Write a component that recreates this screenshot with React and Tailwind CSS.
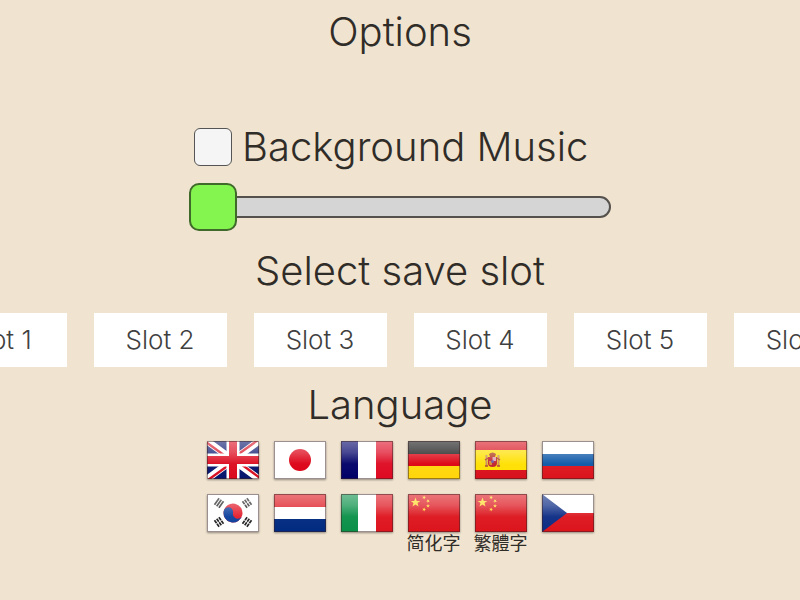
import { useState } from 'react';

const slots = [1, 2, 3, 4, 5, 6];

const star = 'M0 -5L1.3 -1.6L4.8 -1.5L2 0.6L3 4L0 2L-3 4L-2 0.6L-4.8 -1.5L-1.3 -1.6Z';

function HorizontalBands({ colors }) {
  return (
    <>
      <rect width="52" height="13" fill={colors[0]} />
      <rect y="13" width="52" height="12" fill={colors[1]} />
      <rect y="25" width="52" height="13" fill={colors[2]} />
    </>
  );
}

function VerticalBands({ colors }) {
  return (
    <>
      <rect width="17" height="38" fill={colors[0]} />
      <rect x="17" width="18" height="38" fill={colors[1]} />
      <rect x="35" width="17" height="38" fill={colors[2]} />
    </>
  );
}

function UnitedKingdom() {
  return (
    <>
      <rect width="52" height="38" fill="#06146c" />
      <path d="M0 0L52 38M52 0L0 38" stroke="#fff" strokeWidth="7" />
      <path d="M-1 1L25 20M53 37L27 18M51 -1L26 17M1 39L26 21" stroke="#d80f22" strokeWidth="2.4" />
      <path d="M26 0V38M0 19H52" stroke="#fff" strokeWidth="13" />
      <path d="M26 0V38M0 19H52" stroke="#dc0a1e" strokeWidth="8" />
    </>
  );
}

function Japan() {
  return (
    <>
      <rect width="52" height="38" fill="#fff" />
      <circle cx="26" cy="19" r="11" fill="#dc0014" />
    </>
  );
}

function Trigram({ x, y, angle, broken }) {
  return (
    <g transform={`translate(${x} ${y}) rotate(${angle})`} stroke="#222" strokeWidth="1.7">
      <path d="M-4 -2.7H4M-4 0H4M-4 2.7H4" />
      {broken && <path d="M0 -4.5V4.5" stroke="#fff" strokeWidth="0.8" />}
    </g>
  );
}

function SouthKorea() {
  return (
    <>
      <rect width="52" height="38" fill="#fff" />
      <g transform="rotate(12 26 19)">
        <circle cx="26" cy="19" r="9.5" fill="#e21d2c" />
        <path
          d="M16.5 19A4.75 4.75 0 0 1 26 19A4.75 4.75 0 0 0 35.5 19A9.5 9.5 0 0 1 16.5 19Z"
          fill="#0c3f9c"
        />
      </g>
      <Trigram x={12} y={9} angle={-55} />
      <Trigram x={40} y={9} angle={55} broken />
      <Trigram x={12} y={28} angle={55} broken />
      <Trigram x={40} y={28} angle={-55} broken />
    </>
  );
}

function China() {
  return (
    <>
      <rect width="52" height="38" fill="#dc141c" />
      <g fill="#ffda28">
        <path d={star} transform="translate(7.5 8.5)" />
        <path d={star} transform="translate(16 3.5) rotate(20) scale(0.4)" />
        <path d={star} transform="translate(20 7) rotate(40) scale(0.4)" />
        <path d={star} transform="translate(20 12) scale(0.4)" />
        <path d={star} transform="translate(16 15.5) rotate(20) scale(0.4)" />
      </g>
    </>
  );
}

function Spain() {
  return (
    <>
      <rect width="52" height="38" fill="#ffe000" />
      <rect width="52" height="9" fill="#d8101c" />
      <rect y="29" width="52" height="9" fill="#d8101c" />
      <path d="M11.5 14V25M23.5 14V25" stroke="#c9895a" strokeWidth="2" />
      <path d="M10 25H13M22 25H25M10 19L13 17M22 17L25 19" stroke="#b5432a" strokeWidth="1.5" />
      <path d="M14 13Q17.5 10 21 13L20 16H15Z" fill="#b03c1c" />
      <path d="M13 16H22V22Q22 26 17.5 26Q13 26 13 22Z" fill="#c0202c" />
      <path d="M17.5 16H21V20H17.5Z" fill="#dca4b0" />
      <path d="M14 20H17V24H14.5Z" fill="#d88b2c" />
      <circle cx="17.5" cy="20.5" r="1.5" fill="#6a55a5" />
    </>
  );
}

function Czechia() {
  return (
    <>
      <rect width="52" height="19" fill="#fff" />
      <rect y="19" width="52" height="19" fill="#dc141c" />
      <path d="M0 0L25 19L0 38Z" fill="#0c2c84" />
    </>
  );
}

const languages = [
  { id: 'en', name: 'English', art: <UnitedKingdom /> },
  { id: 'ja', name: 'Japanese', art: <Japan /> },
  { id: 'fr', name: 'French', art: <VerticalBands colors={['#000068', '#fff', '#de0a22']} /> },
  { id: 'de', name: 'German', art: <HorizontalBands colors={['#111', '#dc0010', '#ffd60a']} /> },
  { id: 'es', name: 'Spanish', art: <Spain /> },
  { id: 'ru', name: 'Russian', art: <HorizontalBands colors={['#fff', '#0a56a6', '#dc141c']} /> },
  { id: 'ko', name: 'Korean', art: <SouthKorea /> },
  { id: 'nl', name: 'Dutch', art: <HorizontalBands colors={['#dc141c', '#fff', '#002a80']} /> },
  { id: 'it', name: 'Italian', art: <VerticalBands colors={['#0a9048', '#fff', '#de141e']} /> },
  { id: 'zh-Hans', caption: '简化字', art: <China /> },
  { id: 'zh-Hant', caption: '繁體字', art: <China /> },
  { id: 'cs', name: 'Czech', art: <Czechia /> },
];

function Flag({ id, children }) {
  return (
    <svg viewBox="0 0 52 38" className="block h-[38px] w-[52px] shadow-[0_1px_2px_#00000066]">
      <defs>
        <linearGradient id={`gloss-${id}`} x1="0" y1="0" x2="0" y2="1">
          <stop offset="0" stopColor="#fff" stopOpacity="0.42" />
          <stop offset="0.3" stopColor="#fff" stopOpacity="0.28" />
          <stop offset="0.6" stopColor="#fff" stopOpacity="0.04" />
          <stop offset="1" stopColor="#fff" stopOpacity="0" />
        </linearGradient>
      </defs>
      {children}
      <rect width="52" height="38" fill={`url(#gloss-${id})`} />
      <rect x="0.5" y="0.5" width="51" height="37" fill="none" stroke="#3a2020" strokeOpacity="0.5" />
    </svg>
  );
}

function Heading({ children }) {
  return <h2 className="text-center text-[40px] leading-12 font-light">{children}</h2>;
}

export default function App() {
  const [music, setMusic] = useState(false);
  const [volume, setVolume] = useState(0);

  return (
    <main className="flex min-h-screen flex-col items-center overflow-hidden bg-[#f0e4d0] pt-2 pb-10 font-['Inter','Noto_Sans_CJK_SC',sans-serif] text-[#302c28]">
      <h1 className="text-center text-[40px] leading-12 font-light">Options</h1>

      <section className="mt-[67px] w-[422px] max-w-full">
        <label className="flex items-center gap-[10px] pl-[5px] text-[40px] leading-12 font-light whitespace-nowrap">
          <input
            type="checkbox"
            checked={music}
            onChange={(e) => setMusic(e.target.checked)}
            className="size-[38px] shrink-0 appearance-none rounded-md border border-[#555] bg-[#f5f5f6] checked:bg-[#84f44e]"
          />
          Background Music
        </label>
        <input
          type="range"
          aria-label="Music volume"
          min="0"
          max="100"
          value={volume}
          onChange={(e) => setVolume(Number(e.target.value))}
          className="mt-3 block h-12 w-full appearance-none bg-transparent [&::-webkit-slider-runnable-track]:h-[22px] [&::-webkit-slider-runnable-track]:rounded-full [&::-webkit-slider-runnable-track]:border-2 [&::-webkit-slider-runnable-track]:border-[#55514d] [&::-webkit-slider-runnable-track]:bg-[#d5d5d5] [&::-webkit-slider-thumb]:-mt-[15px] [&::-webkit-slider-thumb]:-ml-[2px] [&::-webkit-slider-thumb]:size-12 [&::-webkit-slider-thumb]:appearance-none [&::-webkit-slider-thumb]:rounded-[10px] [&::-webkit-slider-thumb]:border-2 [&::-webkit-slider-thumb]:border-[#3f6a2a] [&::-webkit-slider-thumb]:bg-[#84f44e]"
        />
      </section>

      <section className="mt-4 w-full">
        <Heading>Select save slot</Heading>
        <div className="mt-[18px] flex justify-center gap-[27px]">
          {slots.map((n) => (
            <button
              key={n}
              type="button"
              className="h-[54px] w-[133px] shrink-0 bg-white pb-[2px] text-[26px] font-light text-[#404040]"
            >
              Slot {n}
            </button>
          ))}
        </div>
      </section>

      <section className="mt-[14px]">
        <Heading>Language</Heading>
        <div className="mt-3 grid grid-cols-[repeat(6,52px)] items-start gap-[15px]">
          {languages.map(({ id, name, caption, art }) => (
            <button key={id} type="button" aria-label={name} className="flex flex-col items-center">
              <Flag id={id}>{art}</Flag>
              {caption && (
                <span lang={id} className="text-[18px] leading-6 whitespace-nowrap">
                  {caption}
                </span>
              )}
            </button>
          ))}
        </div>
      </section>
    </main>
  );
}
